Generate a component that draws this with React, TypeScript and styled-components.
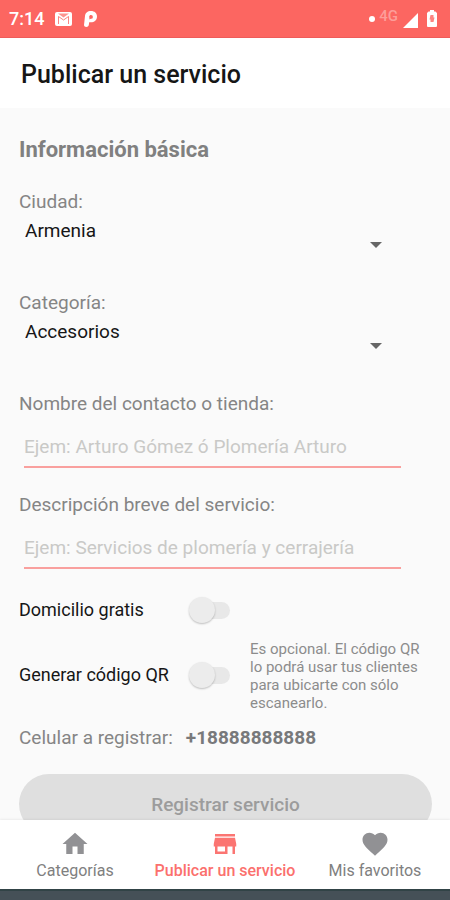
import React, { useState } from "react";
import styled, { createGlobalStyle } from "styled-components";

const GlobalStyle = createGlobalStyle`
  *, *::before, *::after { box-sizing: border-box; }
  body {
    margin: 0;
    font-family: Roboto, "Liberation Sans", sans-serif;
    color: #161616;
    background: #fafafa;
  }
  button, input, select { font: inherit; color: inherit; }
`;

const Screen = styled.div`
  display: flex;
  flex-direction: column;
  height: 100vh;
`;

const StatusBar = styled.div`
  flex: none;
  display: flex;
  align-items: center;
  justify-content: space-between;
  height: 38px;
  padding: 0 13px 0 9px;
  background: #fc6661;
  border-bottom: 1px solid #ee5c5a;
  color: #fff;
`;

const StatusGroup = styled.div`
  display: flex;
  align-items: center;
`;

const Clock = styled.span`
  margin-right: 11px;
  font-size: 18px;
  font-weight: 500;
  line-height: 22px;
`;

const MailIcon = styled.svg`
  width: 17px;
  height: 14px;
  margin-right: 12px;
`;

const Dot = styled.span`
  width: 6px;
  height: 6px;
  margin-right: 4px;
  border-radius: 50%;
  background: #fff;
`;

const Network = styled.span`
  margin-right: 5px;
  padding-bottom: 6px;
  font-size: 15px;
  font-weight: 500;
  line-height: 18px;
  color: #fd9d99;
`;

const SignalIcon = styled.svg`
  width: 15px;
  height: 15px;
  margin: 3px 9px 0 0;
`;

const Header = styled.header`
  flex: none;
  display: flex;
  align-items: center;
  height: 70px;
  padding: 4px 21px 0;
  background: #fff;
`;

const Title = styled.h1`
  margin: 0;
  font-size: 25px;
  font-weight: 500;
  line-height: 32px;
`;

const Form = styled.form`
  flex: 1 1 0;
  min-height: 0;
  overflow-y: auto;
  scrollbar-width: none;
  padding: 26px 18px 16px 19px;
`;

const SectionTitle = styled.h2`
  margin: 0 0 26px;
  font-size: 22px;
  font-weight: 700;
  line-height: 32px;
  color: #808080;
`;

const Field = styled.div`
  display: flex;
  flex-direction: column;
  margin-right: 30px;
  margin-bottom: 27px;
`;

const SelectField = styled(Field)`
  margin-bottom: 31px;
`;

const Label = styled.label`
  font-size: 19px;
  line-height: 20px;
  padding-bottom: 4px;
  color: #858585;
`;

const SelectBox = styled.div`
  display: grid;
  grid-template-areas: "box";
  align-items: end;
`;

const Select = styled.select`
  grid-area: box;
  appearance: none;
  width: 100%;
  height: 46px;
  padding: 0 48px 18px 6px;
  border: 0;
  background: transparent;
  font-size: 19px;
`;

const Caret = styled.svg`
  grid-area: box;
  justify-self: end;
  width: 12px;
  height: 6px;
  margin: 0 20px 14px 0;
  pointer-events: none;
  fill: #666;
`;

const TextInput = styled.input`
  height: 50px;
  margin: 0 1px 0 5px;
  padding: 8px 0 0;
  border: 0;
  border-bottom: 2px solid #f9a09e;
  border-radius: 0;
  background: transparent;
  font-size: 19px;
  &::placeholder { color: #c9c9c7; opacity: 1; }
  &:focus { outline: none; border-bottom-color: #fc6661; }
`;

const SwitchRow = styled.div`
  display: flex;
  align-items: center;
  min-height: 28px;
  & + & { margin-top: 14px; }
`;

const SwitchLabel = styled.label`
  flex: none;
  width: 170px;
  font-size: 18px;
  line-height: 24px;
`;

const Switch = styled.input`
  appearance: none;
  flex: none;
  display: grid;
  align-items: center;
  width: 41px;
  height: 26px;
  margin: 0 20px 0 0;
  &::before, &::after { content: ""; grid-area: 1 / 1; }
  &::before {
    justify-self: end;
    width: 34px;
    height: 17px;
    border-radius: 9px;
    background: #e8e8e8;
  }
  &::after {
    width: 26px;
    height: 26px;
    border-radius: 50%;
    background: #ececec;
    box-shadow: 0 1px 2px rgba(0, 0, 0, 0.24);
  }
  &:checked::before { background: #fdb3b0; }
  &:checked::after { justify-self: end; background: #fc6661; }
`;

const Hint = styled.p`
  flex: 1;
  margin: 0;
  max-width: 180px;
  font-size: 15px;
  line-height: 18px;
  padding-top: 2px;
  color: #8c8c8c;
`;

const PhoneRow = styled.div`
  display: flex;
  gap: 13px;
  margin: 14px 0 24px;
  font-size: 19px;
  line-height: 24px;
  color: #858585;
`;

const PhoneNumber = styled.strong`
  font-weight: 700;
  color: #78797b;
`;

const Submit = styled.button`
  display: block;
  width: 100%;
  height: 60px;
  border: 0;
  border-radius: 30px;
  background: #dfdfdf;
  font-size: 19px;
  font-weight: 500;
  color: #9c9c9c;
`;

const TabBar = styled.nav`
  flex: none;
  display: grid;
  grid-template-columns: repeat(3, 1fr);
  height: 69px;
  background: #fff;
  box-shadow: 0 -1px 2px rgba(0, 0, 0, 0.06);
`;

const Tab = styled.a<{ $active?: boolean }>`
  display: flex;
  flex-direction: column;
  align-items: center;
  padding-top: 9px;
  font-size: 16px;
  font-weight: ${(p) => (p.$active ? 500 : 400)};
  line-height: 20px;
  white-space: nowrap;
  text-decoration: none;
  color: ${(p) => (p.$active ? "#fb706d" : "#808080")};
`;

const TabIcon = styled.svg<{ $active?: boolean }>`
  width: 30px;
  height: 30px;
  margin-bottom: 2px;
  fill: ${(p) => (p.$active ? "#fb7572" : "#919194")};
`;

const SystemBar = styled.div`
  flex: none;
  height: 11px;
  border-top: 2px solid #314346;
  background: #455057;
`;

const tabs = [
  { label: "Categorías", path: "M10 20v-6h4v6h5v-8h3L12 3 2 12h3v8z" },
  {
    label: "Publicar un servicio",
    path: "M20 4H4v2h16V4zm1 10v-2l-1-5H4l-1 5v2h1v6h10v-6h4v6h2v-6h1zm-9 4H6v-4h6v4z",
  },
  {
    label: "Mis favoritos",
    path: "M12 21.35l-1.45-1.32C5.4 15.36 2 12.28 2 8.5 2 5.42 4.42 3 7.5 3c1.74 0 3.41.81 4.5 2.09C13.09 3.81 14.76 3 16.5 3 19.58 3 22 5.42 22 8.5c0 3.78-3.4 6.86-8.55 11.54L12 21.35z",
  },
];

function Dropdown({ id, label, options }: { id: string; label: string; options: string[] }) {
  return (
    <SelectField>
      <Label htmlFor={id}>{label}</Label>
      <SelectBox>
        <Select id={id}>
          {options.map((o) => (
            <option key={o}>{o}</option>
          ))}
        </Select>
        <Caret viewBox="0 0 12 6" aria-hidden="true">
          <path d="M0 0h12L6 6z" />
        </Caret>
      </SelectBox>
    </SelectField>
  );
}

export default function App() {
  const [active, setActive] = useState(1);
  return (
    <>
      <GlobalStyle />
      <Screen>
        <StatusBar>
          <StatusGroup>
            <Clock>7:14</Clock>
            <MailIcon viewBox="0 0 17 14" aria-hidden="true">
              <rect width="17" height="14" rx="2" fill="#fff" />
              <path d="M3.500 12V4.500l5 3.500 5-3.500V12" fill="none" stroke="#fc6661" strokeWidth="1" opacity=".8" />
              <path d="M3 1.500h11L8.500 5.500z" fill="#fc6661" opacity=".7" />
            </MailIcon>
            <svg width="13" height="16" viewBox="0 0 13 16" aria-hidden="true">
              <path
                fill="#fff"
                fillRule="evenodd"
                d="M7 0C3.500 0 1.200 2 1 5L0 14c0 2.500 4.500 2.500 4.800 0l.4-2.800c4.300.8 7.800-1.700 7.800-5.700C13 2.200 10.500 0 7 0zM7 4a1.900 1.900 0 1 1 0 3.800c-.6 0-1 .2-1.500.6L5.200 5.500C5.300 4.600 6 4 7 4z"
              />
            </svg>
          </StatusGroup>
          <StatusGroup>
            <Dot />
            <Network>4G</Network>
            <SignalIcon viewBox="0 0 15 15" aria-hidden="true">
              <path d="M15 0v15H0z" fill="#fff" />
            </SignalIcon>
            <svg width="10" height="17" viewBox="0 0 10 17" aria-hidden="true">
              <path d="M3 0h4v1.500h1.500L10 3v13a1 1 0 0 1-1 1H1a1 1 0 0 1-1-1V3l1.500-1.500H3z" fill="#fff" />
              <path d="M3.500 5h3v2.500h1L6.500 12h-3V9.500h-1z" fill="#fc6661" opacity=".8" />
            </svg>
          </StatusGroup>
        </StatusBar>
        <Header>
          <Title>Publicar un servicio</Title>
        </Header>
        <Form onSubmit={(e) => e.preventDefault()}>
          <SectionTitle>Información básica</SectionTitle>
          <Dropdown id="ciudad" label="Ciudad:" options={["Armenia"]} />
          <Dropdown id="categoria" label="Categoría:" options={["Accesorios"]} />
          <Field>
            <Label htmlFor="nombre">Nombre del contacto o tienda:</Label>
            <TextInput id="nombre" placeholder="Ejem: Arturo Gómez ó Plomería Arturo" />
          </Field>
          <Field>
            <Label htmlFor="descripcion">Descripción breve del servicio:</Label>
            <TextInput id="descripcion" placeholder="Ejem: Servicios de plomería y cerrajería" />
          </Field>
          <SwitchRow>
            <SwitchLabel htmlFor="domicilio">Domicilio gratis</SwitchLabel>
            <Switch id="domicilio" type="checkbox" role="switch" />
          </SwitchRow>
          <SwitchRow>
            <SwitchLabel htmlFor="qr">Generar código QR</SwitchLabel>
            <Switch id="qr" type="checkbox" role="switch" aria-describedby="qr-hint" />
            <Hint id="qr-hint">
              Es opcional. El código QR lo podrá usar tus clientes para ubicarte con sólo escanearlo.
            </Hint>
          </SwitchRow>
          <PhoneRow>
            <span>Celular a registrar:</span>
            <PhoneNumber>+18888888888</PhoneNumber>
          </PhoneRow>
          <Submit type="submit" disabled>
            Registrar servicio
          </Submit>
        </Form>
        <TabBar>
          {tabs.map((t, i) => (
            <Tab
              key={t.label}
              href="#"
              $active={i === active}
              aria-current={i === active ? "page" : undefined}
              onClick={(e) => {
                e.preventDefault();
                setActive(i);
              }}
            >
              <TabIcon viewBox="0 0 24 24" $active={i === active} aria-hidden="true">
                <path d={t.path} />
              </TabIcon>
              {t.label}
            </Tab>
          ))}
        </TabBar>
        <SystemBar />
      </Screen>
    </>
  );
}
